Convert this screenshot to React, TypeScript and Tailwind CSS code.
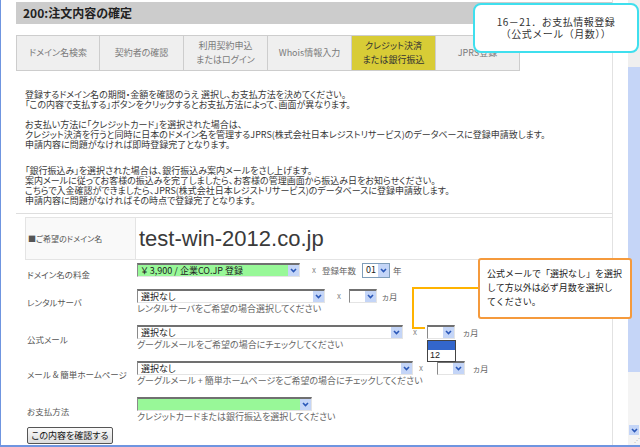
const jp = "font-['Noto_Sans_CJK_JP','Noto_Sans',sans-serif] [font-feature-settings:'palt']";

const tabs = [
  { lines: ["ドメイン名検索"] },
  { lines: ["契約者の確認"] },
  { lines: ["利用契約申込", "またはログイン"] },
  { lines: ["Whois情報入力"] },
  { lines: ["クレジット決済", "または銀行振込"], active: true },
  { lines: ["JPRS登録"] },
];

function Arrow() {
  return (
    <span className="ml-auto flex h-full w-[11px] shrink-0 items-center justify-center bg-[#c4d5f7]">
      <svg width="7" height="5" viewBox="0 0 7 5">
        <path d="M1 1l2.5 2.5L6 1" fill="none" stroke="#2a57b8" strokeWidth="1.6" />
      </svg>
    </span>
  );
}

function Select({ width, green, text }: { width: string; green?: boolean; text?: string }) {
  return (
    <div
      className={`flex h-[14px] items-center border-t-2 border-l border-r border-b border-t-[#707070] border-l-[#8a8a8a] border-r-[#e4e4e4] border-b-[#e4e4e4] ${width} ${
        green ? "bg-[#98f898]" : "bg-white"
      }`}
    >
      <span className="pl-[3px] text-[9px] leading-[10px] text-[#222]">{text}</span>
      <Arrow />
    </div>
  );
}

function Months({ children }: { children?: React.ReactNode }) {
  return (
    <div className="relative">
      <Select width="w-[28px]" />
      {children}
    </div>
  );
}

function Times() {
  return <span className="text-[8px] leading-[10px] text-[#888]">x</span>;
}

function Helper({ text }: { text: string }) {
  return <p className="mt-[1px] text-[9px] leading-[10px] text-[#666]">{text}</p>;
}

export default function App() {
  return (
    <div
      className={`relative flex h-[447px] w-[640px] overflow-hidden border-b-2 border-l border-[#6f95e0] bg-white leading-[10px] ${jp}`}
    >
      <div className="ml-[15px] flex w-[597px] flex-col border-r border-[#e2e2e2]">
        <div className="mt-[2px] flex h-[22px] items-center bg-[#cccccc] pl-[7px] text-[12px] leading-[14px] font-bold text-[#222]">
          200:注文内容の確定
        </div>

        <div className="mt-[11px] flex h-[36px]">
          {tabs.map((tab, i) => (
            <div
              key={i}
              className={`flex w-[84px] flex-col items-center justify-center border-y border-r border-[#cdcdcd] text-[9px] leading-[14px] ${
                i === 0 ? "border-l" : ""
              } ${tab.active ? "bg-[#d8cc36] text-[#333]" : "bg-[#efefef] text-[#7a7a7a]"}`}
            >
              {tab.lines.map((l) => (
                <span key={l}>{l}</span>
              ))}
            </div>
          ))}
        </div>

        <div className="mt-[19px] border-b border-[#dedede] pb-[7px] pl-[9px] text-[9px] leading-[10px] text-[#383838]">
          <p>登録するドメイン名の期間・金額を確認のうえ 選択し、お支払方法を決めてください。</p>
          <p>「この内容で支払する」ボタンをクリックするとお支払方法によって、画面が異なります。</p>
          <p className="mt-[10px]">お支払い方法に「クレジットカード」を選択された場合は、</p>
          <p>クレジット決済を行うと同時に日本のドメイン名を管理するJPRS(株式会社日本レジストリサービス)のデータベースに登録申請致します。</p>
          <p>申請内容に問題がなければ即時登録完了となります。</p>
          <p className="mt-[16px]">「銀行振込み」を選択された場合は、銀行振込み案内メールをさし上げます。</p>
          <p>案内メールに従ってお客様の振込みを完了しましたら、お客様の管理画面から振込み日をお知らせください。</p>
          <p>こちらで入金確認ができましたら、JPRS(株式会社日本レジストリサービス)のデータベースに登録申請致します。</p>
          <p>申請内容に問題がなければその時点で登録完了となります。</p>
        </div>

        <div className="ml-[9px] mt-[3px] flex h-[43px] border border-r-0 border-[#e4e4e4]">
          <div className="flex w-[110px] items-center border-r border-[#e4e4e4] bg-[#f9f9f9] pl-[2px] text-[8px] text-[#555]">
            ■ご希望のドメイン名
          </div>
          <div className="flex items-center pl-[3px] font-['Liberation_Sans',sans-serif] text-[22px] leading-[26px] text-[#3a3a3a]">
            test-win-2012.co.jp
          </div>
        </div>

        <div className="ml-[11px] flex h-[27px]">
          <div className="flex w-[110px] items-center text-[8.5px] text-[#555]">ドメイン名の料金</div>
          <div className="flex h-[17px] items-center self-start pt-[3px]">
            <Select width="w-[163px]" green text="￥ 3,900 / 企業CO.JP 登録" />
            <span className="ml-[12px] flex">
              <Times />
            </span>
            <span className="ml-[6px] text-[8.5px] text-[#666]">登録年数</span>
            <div className="ml-[6px] flex h-[15px] w-[28px] items-center border border-[#7f9db9] bg-white">
              <span className="pl-[3px] text-[9px] text-[#222]">01</span>
              <Arrow />
            </div>
            <span className="ml-[3px] text-[8.5px] text-[#666]">年</span>
          </div>
        </div>

        <div className="ml-[11px] flex h-[36px]">
          <div className="w-[110px] pt-[10px] text-[8.5px] text-[#555]">レンタルサーバ</div>
          <div className="pt-[2px]">
            <div className="flex h-[14px] items-center">
              <Select width="w-[188px]" text="選択なし" />
              <span className="ml-[12px] flex">
                <Times />
              </span>
              <span className="ml-[8px] flex">
                <Months />
              </span>
              <span className="ml-[5px] text-[8.5px] text-[#666]">ヵ月</span>
            </div>
            <Helper text="レンタルサーバをご希望の場合選択してください" />
          </div>
        </div>

        <div className="ml-[11px] flex h-[36px]">
          <div className="w-[110px] pt-[11px] text-[8.5px] text-[#555]">公式メール</div>
          <div className="pt-[2px]">
            <div className="flex h-[14px] items-center">
              <Select width="w-[266px]" text="選択なし" />
              <span className="ml-[10px] flex">
                <Times />
              </span>
              <span className="ml-[10px] flex">
                <Months>
                  <div className="absolute left-0 top-[15px] z-10 w-[29px] border border-[#444] bg-white">
                    <div className="h-[9px] bg-[#3366cc]" />
                    <div className="h-[11px] pl-[2px] font-['Liberation_Sans',sans-serif] text-[9px] leading-[11px] text-[#222]">
                      12
                    </div>
                  </div>
                </Months>
              </span>
              <span className="ml-[8px] text-[8.5px] text-[#666]">ヵ月</span>
            </div>
            <Helper text="グーグルメールをご希望の場合にチェックしてください" />
          </div>
        </div>

        <div className="ml-[11px] flex h-[36px]">
          <div className="w-[110px] pt-[10px] text-[8.5px] text-[#555]">メール & 簡単ホームページ</div>
          <div className="pt-[2px]">
            <div className="flex h-[14px] items-center">
              <Select width="w-[276px]" text="選択なし" />
              <span className="ml-[6px] flex">
                <Times />
              </span>
              <span className="ml-[14px] flex">
                <Months />
              </span>
              <span className="ml-[8px] text-[8.5px] text-[#666]">ヵ月</span>
            </div>
            <Helper text="グーグルメール + 簡単ホームページをご希望の場合にチェックしてください" />
          </div>
        </div>

        <div className="ml-[11px] flex h-[30px]">
          <div className="w-[110px] pt-[11px] text-[8.5px] text-[#555]">お支払方法</div>
          <div className="pt-[2px]">
            <Select width="w-[175px]" green />
            <Helper text="クレジットカードまたは銀行振込を選択してください" />
          </div>
        </div>

        <button className="ml-[11px] mt-[2px] h-[17px] w-[86px] rounded-[2px] border border-[#555] bg-gradient-to-b from-[#fafafa] to-[#dcdcdc] text-[9px] leading-[15px] text-[#111]">
          この内容を確認する
        </button>
      </div>

      <div className="w-[15px]" />

      <div className="flex w-[12px] flex-col">
        <div className="h-[67px] bg-[#efefef]" />
        <div className="h-[305px] bg-[#c5d5f7]" />
        <div className="flex flex-1 flex-col items-center bg-[#f4f4f4]">
          <div className="mt-auto flex h-[10px] w-[10px] items-center justify-center bg-[#c4d5f7]">
            <svg width="7" height="5" viewBox="0 0 7 5">
              <path d="M1 1l2.5 2.5L6 1" fill="none" stroke="#2a57b8" strokeWidth="1.6" />
            </svg>
          </div>
          <div className="h-[10px] w-full text-right text-[6px] leading-[10px] text-[#aaa]">⋰</div>
        </div>
      </div>

      <div className="absolute left-[472px] top-[3px] flex h-[50px] w-[166px] flex-col items-center justify-center rounded-[8px] border-2 border-[#3fdfee] bg-white font-['Noto_Sans_CJK_JP',sans-serif] text-[10px] leading-[12px] tracking-[0.5px] text-[#333] [font-feature-settings:normal]">
        <span>16－21．お支払情報登録</span>
        <span>（公式メール（月数））</span>
      </div>

      <svg className="absolute left-[410px] top-[286px]" width="70" height="46" viewBox="0 0 70 46">
        <polyline points="70,2 2,2 2,42 14,42" fill="none" stroke="#ffb300" strokeWidth="2" />
      </svg>

      <div className="absolute left-[477px] top-[258px] h-[61px] w-[154px] rounded-[3px] border-2 border-[#f59a3c] bg-white pl-[7px] pt-[7px] font-['Noto_Sans_CJK_JP',sans-serif] text-[9px] leading-[14px] text-[#222] [font-feature-settings:normal]">
        <p>公式メールで「選択なし」を選択</p>
        <p>して方以外は必ず月数を選択し</p>
        <p>てください。</p>
      </div>
    </div>
  );
}
